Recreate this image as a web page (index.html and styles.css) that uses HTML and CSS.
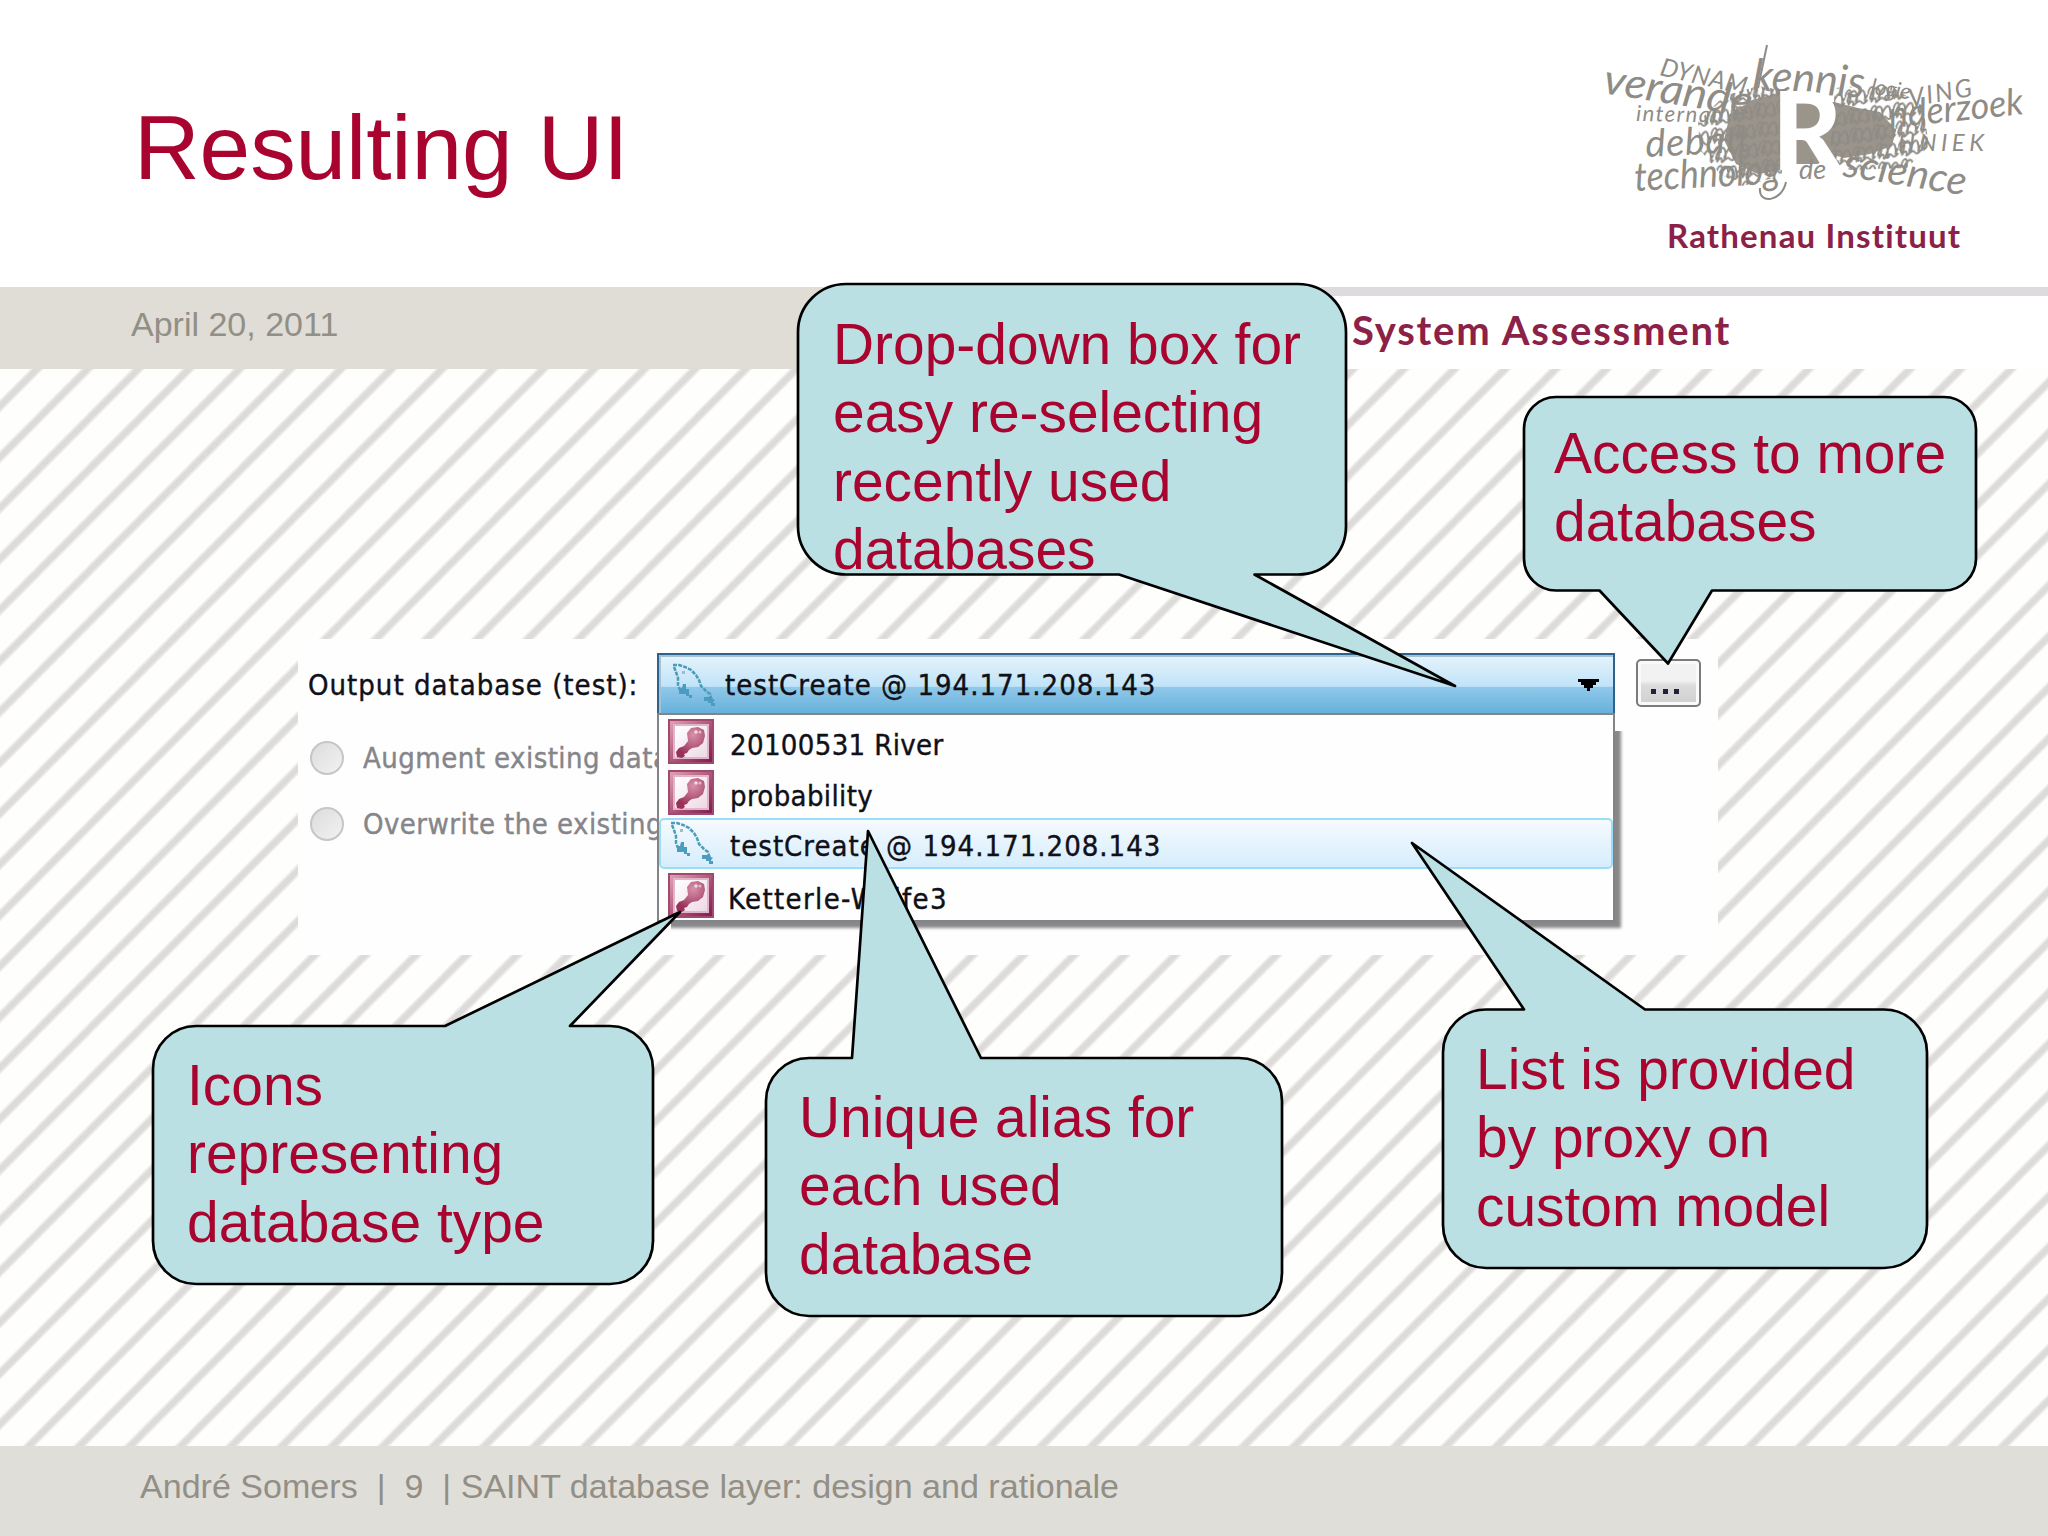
FILE: index.html
```
<!DOCTYPE html>
<html lang="en">
  <head>
    <meta charset="UTF-8" />
    <title>Resulting UI</title>
    <link rel="stylesheet" href="styles.css">
  </head>
  <body>
    <div class="slide">
      <header class="header">
        <h1>Resulting UI</h1>
        <svg class="logo" width="468" height="240" viewBox="0 0 468 240">
          <defs>
            <pattern id="scrawl" width="23" height="19" patternUnits="userSpaceOnUse" patternTransform="rotate(-8)">
              <path d="M0 9c3-9 8-9 6-1s-6 8-3 2 9-10 9-2-4 8 0 2 8-9 8-1-3 7 3 0M2 17c5-6 6-3 5 0s6-5 8-2 3 3 7-1" />
            </pattern>
          </defs>
          <g class="scribble">
            <path class="mass" d="M150 84l22-14 30-8v78l-24 4-22-10-12-24zM202 72h52l24 6 22 4 16 18-4 16-22 8-26 4-14-4-12 10h-36z" />
            <path fill="url(#scrawl)" d="M118 92l26-26 34-10 24 4v86l-40 10-22-12-20-24zM255 58l52-4 36 22 6 40-22 22-56 2-22-6z" />
            <text transform="translate(79 45) rotate(13)" font-size="25" textLength="88">DYNAM</text>
            <text transform="translate(22 63) rotate(9)" font-size="42" textLength="150" lengthAdjust="spacingAndGlyphs">verande</text>
            <text transform="translate(56 91) rotate(1)" font-size="22" textLength="88">internati</text>
            <text transform="translate(66 127) rotate(-3)" font-size="38" textLength="105">debatt</text>
            <text transform="translate(55 161) rotate(-3)" font-size="40" textLength="146" lengthAdjust="spacingAndGlyphs">technolog</text>
            <text transform="translate(172 60) rotate(4)" font-size="44" textLength="112" lengthAdjust="spacingAndGlyphs">kennis</text>
            <text transform="translate(290 64) rotate(8)" font-size="22" textLength="40">logie</text>
            <text transform="translate(330 77) rotate(-10)" font-size="25" textLength="64">VING</text>
            <text transform="translate(310 98) rotate(-6)" font-size="37" textLength="135" lengthAdjust="spacingAndGlyphs">nderzoek</text>
            <text transform="translate(318 121)" font-size="24" textLength="86">HNIEK</text>
            <text transform="translate(262 146) rotate(9)" font-size="40" textLength="124" lengthAdjust="spacingAndGlyphs">science</text>
            <path class="pen" d="M178 58L187 15M180 158c-2 17 22 14 26-6" />
          </g>
          <text class="logo-r" x="192" y="140">R</text>
          <text class="scribble" x="219" y="149" font-size="27">de</text>
          <text class="logo-name" x="87" y="218" textLength="293">Rathenau Instituut</text>
        </svg>
      </header>

      <div class="subheader">
        <div class="date">April 20, 2011</div>
        <div class="programme">System Assessment</div>
      </div>

      <main class="content">
        <svg class="stripes" width="2048" height="1077">
          <defs>
            <pattern id="stripes" x="37" width="50.62" height="50.9" patternUnits="userSpaceOnUse">
              <path class="edge" d="M-10 10.05L10-10.05M-10 60.95L60.62-10.05M40 61.6L61.6 40" />
              <path class="core" d="M-10 10.05L10-10.05M-10 60.95L60.62-10.05M40 61.6L61.6 40" />
            </pattern>
          </defs>
          <rect width="2048" height="1077" fill="url(#stripes)" />
        </svg>

        <section class="dialog">
          <div class="options">
            <div class="label">Output database (test):</div>
            <div class="radio"><i></i><span>Augment existing data</span></div>
            <div class="radio"><i></i><span>Overwrite the existing</span></div>
          </div>
          <div class="combo">
            <div class="selected">
              <svg width="46" height="46"><use href="#dolphin" /></svg>
              <span>testCreate @ 194.171.208.143</span>
              <svg width="21" height="12" viewBox="0 0 21 12"><path d="M0 0h21v3h-3v3h-3v3h-3v3h-3v-3h-3v-3h-3v-3h-3z" /></svg>
            </div>
            <div class="list">
              <div class="item"><svg width="46" height="45"><use href="#access" /></svg><span class="tight">20100531 River</span></div>
              <div class="item"><svg width="46" height="45"><use href="#access" /></svg><span class="tight">probability</span></div>
              <div class="item active"><svg width="46" height="46"><use href="#dolphin" /></svg><span>testCreate @ 194.171.208.143</span></div>
              <div class="item"><svg width="46" height="45"><use href="#access" /></svg><span class="wide">Ketterle-Wolfe3</span></div>
            </div>
          </div>
          <div class="more"><i></i><i></i><i></i></div>
        </section>
      </main>

      <footer class="footer">André Somers&nbsp; |&nbsp; 9&nbsp; | SAINT database layer: design and rationale</footer>

      <!-- callouts lie over the slide -->
      <svg class="bubbles" width="2048" height="1536">
        <path d="M846 284H1298A48 48 0 0 1 1346 332V526A48 48 0 0 1 1298 574.500H1254.500L1455 686L1119 574.500H846A48 48 0 0 1 798 526V332A48 48 0 0 1 846 284Z" />
        <path d="M1556 397H1944A32 32 0 0 1 1976 429V558.500A32 32 0 0 1 1944 590.500H1712L1668 663.500L1599.500 590.500H1556A32 32 0 0 1 1524 558.500V429A32 32 0 0 1 1556 397Z" />
        <path d="M196 1026H445L680 912L570 1026H610A43 43 0 0 1 653 1069V1241A43 43 0 0 1 610 1284H196A43 43 0 0 1 153 1241V1069A43 43 0 0 1 196 1026Z" />
        <path d="M809 1058H852L868 831L981 1058H1239A43 43 0 0 1 1282 1101V1273A43 43 0 0 1 1239 1316H809A43 43 0 0 1 766 1273V1101A43 43 0 0 1 809 1058Z" />
        <path d="M1486 1009.500H1524L1412 843L1645 1009.500H1884A43 43 0 0 1 1927 1052.500V1225A43 43 0 0 1 1884 1268H1486A43 43 0 0 1 1443 1225V1052.500A43 43 0 0 1 1486 1009.500Z" />
      </svg>
      <p class="note note-dropdown">Drop-down box for<br>easy re-selecting<br>recently used<br>databases</p>
      <p class="note note-more">Access to more<br>databases</p>
      <p class="note note-icons">Icons<br>representing<br>database type</p>
      <p class="note note-alias">Unique alias for<br>each used<br>database</p>
      <p class="note note-list">List is provided<br>by proxy on<br>custom model</p>
    </div>

    <svg class="symbols" width="0" height="0">
      <defs>
        <linearGradient id="frame" x1="0" y1="0" x2="1" y2="1">
          <stop offset="0" stop-color="#e5a9b9" />
          <stop offset="0.5" stop-color="#b0587c" />
          <stop offset="1" stop-color="#7a1650" />
        </linearGradient>
        <linearGradient id="paper" x1="0" y1="0" x2="1" y2="1">
          <stop offset="0" stop-color="#ffffff" />
          <stop offset="1" stop-color="#eed9e5" />
        </linearGradient>
        <radialGradient id="key" cx="0.6" cy="0.25" r="0.7">
          <stop offset="0" stop-color="#d792a9" />
          <stop offset="1" stop-color="#993059" />
        </radialGradient>
        <symbol id="access" viewBox="0 0 46 45">
          <rect width="46" height="45" fill="url(#frame)" />
          <rect x="1" y="1" width="44" height="43" fill="none" stroke="#a14a6e" stroke-width="2" />
          <rect x="5" y="5" width="36" height="35" fill="#e3b4c7" />
          <rect x="7" y="7" width="32" height="31" fill="url(#paper)" />
          <path d="M19 14l4-5 7-1 6 3 1 6-2 7-5 4-6 1-3 2-2 3-3 1 1 2-3 2-5-1-1-5 3-4 5-2 4-5z" fill="url(#key)" />
          <circle cx="28" cy="13" r="1.800" fill="#f3d9e2" />
          <circle cx="32" cy="13" r="1.500" fill="#e6b9c8" />
        </symbol>
        <symbol id="dolphin" viewBox="0 0 46 46">
          <path d="M3 3h6l6 2 6 3 5 5 3 5 2 6 5 5 4 3 1 4 3 3" fill="none" stroke="#4b9cb9" stroke-width="2.500" stroke-dasharray="4 1.200" />
          <path d="M4 5l2 5 2 6v7l2 5" fill="none" stroke="#4b9cb9" stroke-width="2.500" stroke-dasharray="4 1.200" />
          <path d="M9 26h3l1-4h3v5h3v6h3v3h-3v-2h-3v-2h-7zM34 35h6v2h3v4h2v3h-4v-3h-3v-2h-4z" fill="#4b9cc0" />
          <path d="M12 9h3v3h-3z" fill="#9bbdd0" />
        </symbol>
      </defs>
    </svg>
  </body>
</html>
```
FILE: styles.css
```
body {
  margin: 0;
  background: #fff;
  font-family: "Liberation Sans", Arial, sans-serif;
}
.slide {
  position: relative;
  width: 2048px;
  height: 1536px;
  overflow: hidden;
  display: flex;
  flex-direction: column;
}
.header {
  height: 287px;
  display: flex;
  justify-content: space-between;
}
h1 {
  margin: 95px 0 0 134px;
  font-size: 91px;
  font-weight: normal;
  line-height: 106px;
  letter-spacing: -0.1px;
  color: #a9042f;
}
.logo {
  margin-top: 30px;
}
.scribble {
  font-family: Lato, sans-serif;
  font-style: italic;
  fill: #8f8c86;
}
.scribble .mass {
  fill: #9a948b;
}
.scribble .pen,
#scrawl path {
  fill: none;
  stroke: #8f8c86;
  stroke-width: 2;
}
.logo-r {
  font: 900 108px Lato, sans-serif;
  fill: #fff;
}
.logo-name {
  font: bold 33px Lato, sans-serif;
  font-variant-ligatures: none;
  fill: #8c2148;
}
.subheader {
  height: 82px;
  display: flex;
}
.date {
  width: 870px;
  padding: 17px 0 0 131px;
  box-sizing: border-box;
  background: #dfddd6;
  font-size: 34px;
  line-height: 40px;
  color: #928f86;
}
.programme {
  flex: 1;
  padding: 10px 0 0 482px;
  border-top: 9px solid #dddbdd;
  box-sizing: border-box;
  font: bold 40px/48px Lato, sans-serif;
  letter-spacing: 1.8px;
  color: #8c2148;
}
.content {
  height: 1077px;
  position: relative;
  background: #fefefc;
}
.stripes {
  position: absolute;
  top: 0;
  left: 0;
}
.stripes .edge {
  stroke: #ecebea;
  stroke-width: 9;
}
.stripes .core {
  stroke: #dddbda;
  stroke-width: 5.5;
}
.dialog {
  position: relative;
  display: flex;
  width: 1420px;
  height: 316px;
  margin-left: 298px;
  top: 270px;
  background: #fefefe;
  font-family: "DejaVu Sans Condensed", "DejaVu Sans", sans-serif;
  font-stretch: condensed;
  font-size: 29px;
  line-height: 34px;
  letter-spacing: 1px;
  color: #101018;
  white-space: nowrap;
  -webkit-text-stroke: 0.4px;
}
.options {
  width: 359px;
  overflow: hidden;
}
.label {
  margin: 29px 0 0 10px;
}
.radio {
  display: flex;
  align-items: center;
  height: 34px;
  margin: 39px 0 0 12px;
  letter-spacing: 0.45px;
  color: #85858a;
}
.radio + .radio {
  margin-top: 32px;
}
.radio i {
  flex: none;
  width: 30px;
  height: 30px;
  margin-right: 19px;
  border: 2px solid #c6c6c6;
  border-radius: 50%;
  background: linear-gradient(135deg, #dcdcdc, #f2f2f2);
}
.combo {
  width: 958px;
  margin-top: 14px;
}
.selected {
  display: flex;
  align-items: center;
  height: 60px;
  box-sizing: border-box;
  border: 2px solid #2c628b;
  border-bottom: 0;
  padding: 2px 14px 0 11px;
  background: linear-gradient(#e6f3fb, #c0e4f9 54%, #90c8e9 56%, #67b1dc);
  box-shadow: inset 2px 2px 0 #a5c2d4;
}
.selected span {
  flex: 1;
  margin-left: 9px;
}
.list {
  height: 209px;
  box-sizing: border-box;
  border: 2px solid #828488;
  background: #fefefe;
  box-shadow: 7px 7px 3px -1px #88888a;
  clip-path: polygon(0 0, 958px 0, 958px 18px, 980px 18px, 980px 230px, 14px 230px, 14px 209px, 0 209px);
}
.item {
  display: flex;
  align-items: center;
  height: 51.3px;
  box-sizing: border-box;
  padding: 2px 0 0 9px;
}
.item span {
  margin-left: 16px;
  padding-top: 6px;
}
.item .tight {
  letter-spacing: 0.35px;
}
.item .wide {
  margin-left: 14px;
  letter-spacing: 1.35px;
}
.item.active {
  border: 2px solid #9bdcf6;
  border-radius: 5px;
  padding: 0 0 0 7px;
  background: linear-gradient(#f5fafe, #d6edfc);
}
.more {
  display: flex;
  gap: 6.5px;
  width: 65px;
  height: 48px;
  margin: 20px 0 0 21px;
  padding: 28px 0 0 13px;
  box-sizing: border-box;
  border: 2px solid #7b7b7b;
  border-radius: 5px;
  background: linear-gradient(#f2f2f2 45%, #dcdcdc 55%, #d0d0d0);
  box-shadow: inset 0 0 0 3px #fafafa;
}
.more i {
  width: 5px;
  height: 5px;
  background: #22203a;
}
.footer {
  flex: 1;
  padding: 20px 0 0 140px;
  background: #e0ded9;
  font-size: 34px;
  line-height: 40px;
  letter-spacing: 0.03px;
  color: #928f86;
}
.bubbles {
  position: absolute;
  top: 0;
  left: 0;
}
.bubbles path {
  fill: #bbe0e3;
  stroke: #000;
  stroke-width: 2.7;
  stroke-linejoin: round;
}
.note {
  position: absolute;
  margin: 0;
  font-size: 56.9px;
  line-height: 68.3px;
  color: #a9042f;
  white-space: nowrap;
}
.note-dropdown {
  left: 833px;
  top: 310px;
}
.note-more {
  left: 1554px;
  top: 419px;
}
.note-icons {
  left: 187px;
  top: 1051px;
}
.note-alias {
  left: 799px;
  top: 1083px;
}
.note-list {
  left: 1476px;
  top: 1035px;
}
.symbols {
  position: absolute;
}
```
